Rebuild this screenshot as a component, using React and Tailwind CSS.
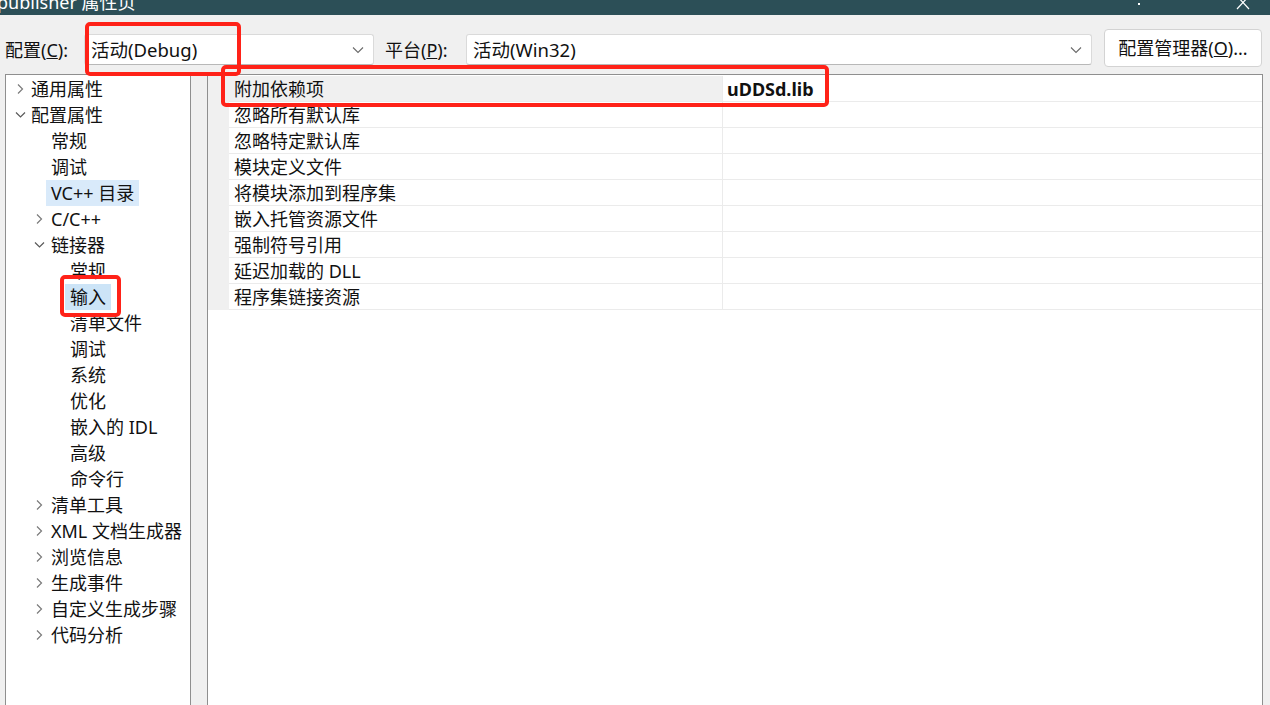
import React from 'react';

const TREE = [
  { t: '通用属性', l: 0, c: 'r' },
  { t: '配置属性', l: 0, c: 'd' },
  { t: '常规', l: 1 },
  { t: '调试', l: 1 },
  { t: 'VC++ 目录', l: 1, sel: 'light' },
  { t: 'C/C++', l: 1, c: 'r' },
  { t: '链接器', l: 1, c: 'd' },
  { t: '常规', l: 2 },
  { t: '输入', l: 2, sel: 'strong' },
  { t: '清单文件', l: 2 },
  { t: '调试', l: 2 },
  { t: '系统', l: 2 },
  { t: '优化', l: 2 },
  { t: '嵌入的 IDL', l: 2 },
  { t: '高级', l: 2 },
  { t: '命令行', l: 2 },
  { t: '清单工具', l: 1, c: 'r' },
  { t: 'XML 文档生成器', l: 1, c: 'r' },
  { t: '浏览信息', l: 1, c: 'r' },
  { t: '生成事件', l: 1, c: 'r' },
  { t: '自定义生成步骤', l: 1, c: 'r' },
  { t: '代码分析', l: 1, c: 'r' },
];

const PROPS = [
  '附加依赖项',
  '忽略所有默认库',
  '忽略特定默认库',
  '模块定义文件',
  '将模块添加到程序集',
  '嵌入托管资源文件',
  '强制符号引用',
  '延迟加载的 DLL',
  '程序集链接资源',
];

const INDENT = { 0: 'pl-[6px]', 1: 'pl-[26px]', 2: 'pl-[45px]' };

function Chevron({ dir, level }) {
  const x = level === 0 ? 0 : -1;
  return (
    <svg width="19" height="26" viewBox="0 0 19 26" className="shrink-0">
      {dir === 'r' && (
        <path d={`M${6 + x} 8.5 L${10.5 + x} 13 L${6 + x} 17.5`} fill="none" stroke="#7a7a7a" strokeWidth="1.2" />
      )}
      {dir === 'd' && (
        <path d={`M${4 + x} 10.5 L${8.5 + x} 15 L${13 + x} 10.5`} fill="none" stroke="#5a5a5a" strokeWidth="1.2" />
      )}
    </svg>
  );
}

function Dropdown({ text, width }) {
  return (
    <div className={`${width} h-[31px] bg-white border border-[#dadada] border-b-[#b8b8b8] rounded-[3px] flex items-center pl-[6px] pr-[9px]`}>
      <span className="flex-1 text-[18.5px]">{text}</span>
      <svg width="12" height="8" viewBox="0 0 12 8">
        <path d="M1 1.5 L6 6.5 L11 1.5" fill="none" stroke="#6a6a6a" strokeWidth="1.1" />
      </svg>
    </div>
  );
}

export default function App() {
  return (
    <div className="relative w-[1270px] h-[705px] overflow-hidden bg-[#f0f0f0] flex flex-col text-[18px] leading-[26px] text-[#111] font-['Noto_Sans','Noto_Sans_CJK_SC',sans-serif]">
      {/* title bar, cut off at the top */}
      <div className="h-[15px] shrink-0 bg-[#2c4f57] flex overflow-hidden text-white">
        <div className="mt-[-11px] ml-[-3px]">publisher 属性页</div>
        <div className="ml-auto mr-[96px] mt-[3px] w-[2px] h-[2px] bg-white" />
        <svg width="16" height="15" viewBox="0 0 16 15" className="mr-[18px]">
          <path d="M1 -4 L13 9 M13 -4 L1 9" stroke="#ffffff" strokeWidth="1.2" />
        </svg>
      </div>

      {/* config bar */}
      <div className="h-[59px] shrink-0 flex items-center pt-[10px] pl-[5px]">
        <div className="w-[79px]">配置(<span className="underline">C</span>):</div>
        <Dropdown text="活动(Debug)" width="w-[290px]" />
        <div className="ml-[11px] w-[81px]">平台(<span className="underline">P</span>):</div>
        <Dropdown text="活动(Win32)" width="w-[626px]" />
        <button className="ml-[12px] w-[158px] h-[38px] mt-[-3px] bg-white border border-[#d3d3d3] rounded-[4px] flex items-center justify-center">
          配置管理器(<span className="underline">O</span>)...
        </button>
      </div>

      {/* body */}
      <div className="flex-1 flex pl-[5px] min-h-0">
        <div className="w-[186px] shrink-0 bg-white border border-b-0 border-[#8f8f8f] pt-[1px]">
          {TREE.map((it, i) => (
            <div key={i} className={`h-[26px] flex items-center ${INDENT[it.l]}`}>
              <Chevron dir={it.c} level={it.l} />
              <span
                className={`h-full flex items-center px-[5px] -ml-[5px] whitespace-nowrap ${
                  it.sel === 'light' ? 'bg-[#d9eafa]' : it.sel === 'strong' ? 'bg-[#cce4f7]' : ''
                }`}
              >
                {it.t}
              </span>
            </div>
          ))}
        </div>

        <div className="w-[16px] shrink-0" />

        <div className="w-[1056px] shrink-0 bg-white border border-b-0 border-[#8f8f8f] pt-[1px]">
          <div className="flex">
            <div className="w-[21px] shrink-0 bg-[#f0f0f0]" />
            <div className="flex-1">
              {PROPS.map((p, i) => (
                <div key={p} className="h-[26px] flex border-b border-[#ebebeb]">
                  <div className={`w-[493px] shrink-0 pl-[5px] flex items-center ${i === 0 ? 'bg-[#f0f0f0]' : ''}`}>{p}</div>
                  <div className="flex-1 border-l border-[#ebebeb] pl-[4px] flex items-center font-bold">
                    {i === 0 ? 'uDDSd.lib' : ''}
                  </div>
                </div>
              ))}
            </div>
          </div>
        </div>
      </div>

      {/* red annotation boxes */}
      <div className="absolute left-[85px] top-[22px] w-[156px] h-[54px] border-[4px] border-[#ff2218] rounded-[5px]" />
      <div className="absolute left-[221px] top-[65px] w-[608px] h-[42px] border-[4px] border-[#ff2218] rounded-[5px]" />
      <div className="absolute left-[60px] top-[275px] w-[61px] h-[42px] border-[4px] border-[#ff2218] rounded-[5px]" />
    </div>
  );
}
